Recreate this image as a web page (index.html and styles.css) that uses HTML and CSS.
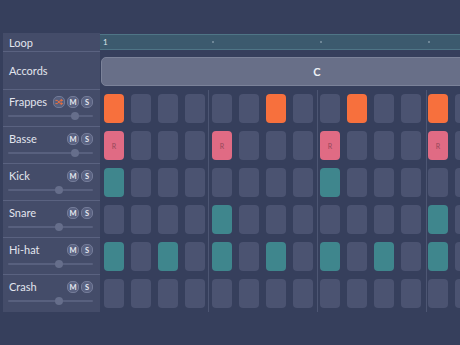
FILE: index.html
```html
<!DOCTYPE html>
<html lang="fr">
<head>
<meta charset="utf-8">
<title>Séquenceur</title>
<link rel="stylesheet" href="styles.css">
</head>
<body>
<div class="app">
  <aside class="panel">
    <div class="prow loop-label">Loop</div>
    <div class="prow chord-label">Accords</div>
    <div class="track">
      <div class="thead"><span class="tname">Frappes</span>
        <div class="btns">
          <span class="btn shuffle"><svg viewBox="0 0 10 10" width="8" height="8"><path d="M1 3h2l3.5 4H9M1 7h2l3.5-4H9M7.6 1.6L9 3 7.6 4.4M7.6 5.6L9 7 7.6 8.4" fill="none" stroke="#f0703d" stroke-width="1.2" stroke-linecap="round" stroke-linejoin="round"/></svg></span>
          <span class="btn">M</span><span class="btn">S</span>
        </div>
      </div>
      <div class="slider"><span class="thumb" style="left:79%"></span></div>
    </div>
    <div class="track">
      <div class="thead"><span class="tname">Basse</span><div class="btns"><span class="btn">M</span><span class="btn">S</span></div></div>
      <div class="slider"><span class="thumb" style="left:79%"></span></div>
    </div>
    <div class="track">
      <div class="thead"><span class="tname">Kick</span><div class="btns"><span class="btn">M</span><span class="btn">S</span></div></div>
      <div class="slider"><span class="thumb" style="left:60%"></span></div>
    </div>
    <div class="track">
      <div class="thead"><span class="tname">Snare</span><div class="btns"><span class="btn">M</span><span class="btn">S</span></div></div>
      <div class="slider"><span class="thumb" style="left:60%"></span></div>
    </div>
    <div class="track">
      <div class="thead"><span class="tname">Hi-hat</span><div class="btns"><span class="btn">M</span><span class="btn">S</span></div></div>
      <div class="slider"><span class="thumb" style="left:60%"></span></div>
    </div>
    <div class="track last">
      <div class="thead"><span class="tname">Crash</span><div class="btns"><span class="btn">M</span><span class="btn">S</span></div></div>
      <div class="slider"><span class="thumb" style="left:60%"></span></div>
    </div>
  </aside>
  <main class="seq">
    <div class="loopbar">
      <div class="seg"><span class="num">1</span></div>
      <div class="seg"><i class="dot"></i></div>
      <div class="seg"><i class="dot"></i></div>
      <div class="seg"><i class="dot"></i></div>
    </div>
    <div class="chordrow"><div class="chord">C</div></div>
    <div class="grid">
      <div class="lane">
        <span class="cell on-o"></span><span class="cell"></span><span class="cell"></span><span class="cell"></span>
        <span class="cell"></span><span class="cell"></span><span class="cell on-o"></span><span class="cell"></span>
        <span class="cell"></span><span class="cell on-o"></span><span class="cell"></span><span class="cell"></span>
        <span class="cell on-o"></span><span class="cell"></span><span class="cell"></span><span class="cell"></span>
      </div>
      <div class="lane">
        <span class="cell on-p">R</span><span class="cell"></span><span class="cell"></span><span class="cell"></span>
        <span class="cell on-p">R</span><span class="cell"></span><span class="cell"></span><span class="cell"></span>
        <span class="cell on-p">R</span><span class="cell"></span><span class="cell"></span><span class="cell"></span>
        <span class="cell on-p">R</span><span class="cell"></span><span class="cell"></span><span class="cell"></span>
      </div>
      <div class="lane">
        <span class="cell on-t"></span><span class="cell"></span><span class="cell"></span><span class="cell"></span>
        <span class="cell"></span><span class="cell"></span><span class="cell"></span><span class="cell"></span>
        <span class="cell on-t"></span><span class="cell"></span><span class="cell"></span><span class="cell"></span>
        <span class="cell"></span><span class="cell"></span><span class="cell"></span><span class="cell"></span>
      </div>
      <div class="lane">
        <span class="cell"></span><span class="cell"></span><span class="cell"></span><span class="cell"></span>
        <span class="cell on-t"></span><span class="cell"></span><span class="cell"></span><span class="cell"></span>
        <span class="cell"></span><span class="cell"></span><span class="cell"></span><span class="cell"></span>
        <span class="cell on-t"></span><span class="cell"></span><span class="cell"></span><span class="cell"></span>
      </div>
      <div class="lane">
        <span class="cell on-t"></span><span class="cell"></span><span class="cell on-t"></span><span class="cell"></span>
        <span class="cell on-t"></span><span class="cell"></span><span class="cell on-t"></span><span class="cell"></span>
        <span class="cell on-t"></span><span class="cell"></span><span class="cell on-t"></span><span class="cell"></span>
        <span class="cell on-t"></span><span class="cell"></span><span class="cell on-t"></span><span class="cell"></span>
      </div>
      <div class="lane">
        <span class="cell"></span><span class="cell"></span><span class="cell"></span><span class="cell"></span>
        <span class="cell"></span><span class="cell"></span><span class="cell"></span><span class="cell"></span>
        <span class="cell"></span><span class="cell"></span><span class="cell"></span><span class="cell"></span>
        <span class="cell"></span><span class="cell"></span><span class="cell"></span><span class="cell"></span>
      </div>
    </div>
  </main>
</div>
</body>
</html>
```
FILE: styles.css
```css
html, body {
  margin: 0;
  padding: 0;
}
body {
  background: #363f5c;
  font-family: Lato, "Liberation Sans", sans-serif;
  width: 460px;
  height: 345px;
  overflow: hidden;
}
.app {
  display: flex;
  align-items: flex-start;
  padding: 33px 0 0 3px;
}
.panel {
  width: 97px;
  flex: none;
  background: #444c69;
}
.prow {
  color: #e2e5ee;
  font-size: 11px;
  padding-left: 6px;
  border-bottom: 1px solid #5a6280;
  display: flex;
  align-items: center;
}
.loop-label {
  height: 18px;
}
.chord-label {
  height: 37px;
}
.track {
  box-sizing: border-box;
  height: 37px;
  padding: 6px 7px 0 5px;
  border-bottom: 1px solid #5a6280;
}
.track.last {
  border-bottom: none;
}
.thead {
  display: flex;
  align-items: center;
  justify-content: space-between;
  height: 12px;
}
.tname {
  color: #e2e5ee;
  font-size: 11px;
  line-height: 12px;
  padding-left: 1px;
}
.btns {
  display: flex;
  gap: 2px;
}
.btn {
  box-sizing: border-box;
  width: 12px;
  height: 12px;
  border-radius: 5px;
  background: #5a6281;
  border: 1px solid #737b98;
  color: #e6e9f0;
  font-size: 7.5px;
  font-weight: 700;
  display: flex;
  align-items: center;
  justify-content: center;
}
.btn.shuffle {
  background: #56607f;
}
.slider {
  position: relative;
  height: 2px;
  margin-top: 7px;
  background: #58607e;
  border-radius: 1px;
}
.thumb {
  position: absolute;
  top: -3px;
  width: 8px;
  height: 8px;
  margin-left: -4px;
  border-radius: 50%;
  background: #666e8b;
}
.seq {
  flex: 1;
  min-width: 0;
  overflow: hidden;
}
.loopbar {
  box-sizing: border-box;
  margin-top: 1px;
  height: 16px;
  background: #3c5a6e;
  border-top: 1px solid #4f7586;
  border-bottom: 1px solid #4f7586;
  display: flex;
}
.seg {
  flex: none;
  width: 108px;
  box-sizing: border-box;
  padding-left: 3px;
  display: flex;
  align-items: center;
}
.num {
  color: #dfe4ea;
  font-size: 8px;
}
.dot {
  width: 2px;
  height: 2px;
  border-radius: 50%;
  background: #7f96a4;
  margin-left: 1px;
}
.chordrow {
  margin-top: 7px;
  padding-left: 1px;
  display: flex;
}
.chord {
  flex: none;
  box-sizing: border-box;
  width: 432px;
  height: 29px;
  border-radius: 5px;
  background: #686f88;
  border: 1px solid #7b8299;
  color: #eef0f5;
  font-size: 11px;
  font-weight: 700;
  display: flex;
  align-items: center;
  justify-content: center;
}
.grid {
  margin-top: 4px;
  padding-left: 4px;
  background: repeating-linear-gradient(to right, transparent 0 108px, #4d5673 108px 109px);
}
.lane {
  box-sizing: border-box;
  height: 37px;
  padding-top: 4px;
  display: flex;
  gap: 7px;
}
.cell {
  flex: none;
  width: 20px;
  height: 29px;
  border-radius: 4px;
  background: #4b5371;
  display: flex;
  align-items: center;
  justify-content: center;
  font-size: 7px;
}
.cell.on-o {
  background: #f7703d;
}
.cell.on-p {
  background: #e06b84;
  color: #94485a;
}
.cell.on-t {
  background: #3f868d;
}
```
